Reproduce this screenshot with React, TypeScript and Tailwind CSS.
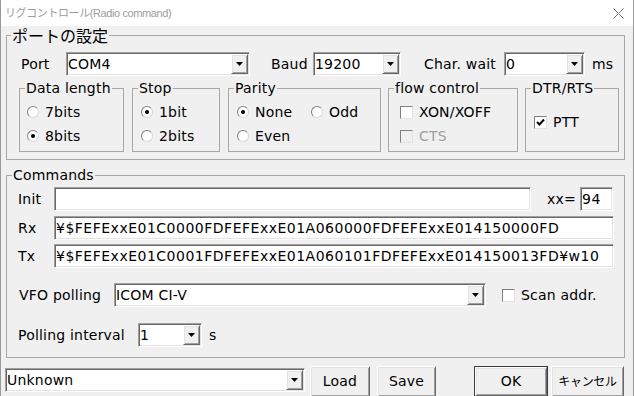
import type { ReactNode } from 'react';

const sunken =
  'bg-white border border-t-[#a0a0a0] border-l-[#a0a0a0] border-r-white border-b-white shadow-[inset_1px_1px_0_#696969,inset_-1px_-1px_0_#e3e3e3]';
const raised =
  'bg-[#f0f0f0] border border-t-white border-l-white border-r-[#696969] border-b-[#696969] shadow-[inset_1px_1px_0_#e3e3e3,inset_-1px_-1px_0_#a0a0a0]';

function Combo({ value, className }: { value: string; className: string }) {
  return (
    <div className={`${sunken} flex h-[24px] p-[1px] ${className}`}>
      <span className="flex-1 leading-[20px] whitespace-nowrap overflow-hidden">{value}</span>
      <span className={`${raised} w-[17px] flex items-center justify-center`}>
        <svg width="7" height="4" viewBox="0 0 7 4">
          <path d="M0 0H7L3.5 4Z" fill="#000" />
        </svg>
      </span>
    </div>
  );
}

function Field({ value, className }: { value: string; className: string }) {
  return (
    <div className={`${sunken} h-[24px] px-[1px] leading-[22px] tracking-[0.5px] whitespace-nowrap overflow-hidden ${className}`}>
      {value}
    </div>
  );
}

function Radio({ checked, label, className = '' }: { checked?: boolean; label: string; className?: string }) {
  return (
    <div className={`flex items-center h-[16px] ${className}`}>
      <span className="w-[12px] h-[12px] rounded-full bg-white border border-t-[#808080] border-l-[#808080] border-r-[#d8d8d8] border-b-[#d8d8d8] flex items-center justify-center">
        {checked && <span className="w-[4px] h-[4px] rounded-full bg-black" />}
      </span>
      <span className="ml-[6px]">{label}</span>
    </div>
  );
}

function Check({ checked, label, disabled }: { checked?: boolean; label: string; disabled?: boolean }) {
  return (
    <div className={`flex items-center h-[16px] ${disabled ? 'text-[#a0a0a0]' : ''}`}>
      <span
        className={`w-[13px] h-[13px] border border-t-[#808080] border-l-[#808080] border-r-[#e3e3e3] border-b-[#e3e3e3] flex items-center justify-center ${
          disabled ? 'bg-[#f0f0f0]' : 'bg-white'
        }`}
      >
        {checked && (
          <svg width="9" height="9" viewBox="0 0 9 9">
            <path d="M1 4L3.5 6.5L8 1.5" stroke="#000" strokeWidth="2" fill="none" />
          </svg>
        )}
      </span>
      <span className="ml-[6px]">{label}</span>
    </div>
  );
}

function Group({ title, className, children }: { title: string; className: string; children: ReactNode }) {
  return (
    <fieldset className={`border border-[#a8a8a8] ${className}`}>
      <legend className="ml-[5px] px-[1px] leading-[16px]">{title}</legend>
      {children}
    </fieldset>
  );
}

function Button({ label, isDefault, className }: { label: string; isDefault?: boolean; className: string }) {
  return (
    <div className={`h-[31px] ${isDefault ? 'border border-[#3c3c3c]' : ''} ${className}`}>
      <div className={`${raised} h-full flex items-center justify-center`}>{label}</div>
    </div>
  );
}

export default function App() {
  return (
    <div className="w-[634px] h-[396px] bg-[#f0f0f0] border-x border-[#9a9a9a] text-[14px] tracking-[0.2px] text-black font-['DejaVu_Sans','Noto_Sans_CJK_JP',sans-serif] overflow-hidden">
      {/* Title bar */}
      <div className="h-[26px] bg-white flex items-center justify-between pl-[4px] pr-[9px]">
        <span className="text-[11px] tracking-[-0.4px] text-[#9c9c9c] font-['Liberation_Sans','Noto_Sans_CJK_JP',sans-serif]">
          リグコントロール(Radio command)
        </span>
        <svg width="11" height="11" viewBox="0 0 11 11">
          <path d="M0.5 0.5L10.5 10.5M10.5 0.5L0.5 10.5" stroke="#7a7a7a" strokeWidth="1" />
        </svg>
      </div>

      <div className="px-[5px]">
        {/* Port settings */}
        <fieldset className="border border-[#a8a8a8] w-[619px]">
          <legend className="ml-[4px] px-[1px] text-[16px] leading-[18px] tracking-normal font-['Noto_Sans_CJK_JP',sans-serif]">
            ポートの設定
          </legend>
          <div className="pl-[14px] pt-[8px] flex items-center">
            <span className="w-[45px]">Port</span>
            <Combo value="COM4" className="w-[184px]" />
            <span className="ml-[21px] w-[42px]">Baud</span>
            <Combo value="19200" className="w-[88px]" />
            <span className="ml-[23px] w-[80px]">Char. wait</span>
            <Combo value="0" className="w-[81px]" />
            <span className="ml-[7px]">ms</span>
          </div>
          <div className="pl-[12px] mt-[4px] pb-[7px] flex gap-[8px]">
            <Group title="Data length" className="w-[105px]">
              <div className="pl-[7px] pt-[8px] pb-[7px] flex flex-col gap-[8px]">
                <Radio label="7bits" />
                <Radio label="8bits" checked />
              </div>
            </Group>
            <Group title="Stop" className="w-[88px]">
              <div className="pl-[8px] pt-[8px] pb-[7px] flex flex-col gap-[8px]">
                <Radio label="1bit" checked />
                <Radio label="2bits" />
              </div>
            </Group>
            <Group title="Parity" className="w-[153px]">
              <div className="pl-[8px] pt-[8px] pb-[7px] flex flex-col gap-[8px]">
                <div className="flex">
                  <Radio label="None" checked className="w-[74px]" />
                  <Radio label="Odd" />
                </div>
                <Radio label="Even" />
              </div>
            </Group>
            <Group title="flow control" className="w-[130px] -ml-[1px]">
              <div className="pl-[11px] pt-[8px] pb-[7px] flex flex-col gap-[8px]">
                <Check label="XON/XOFF" />
                <Check label="CTS" disabled />
              </div>
            </Group>
            <Group title="DTR/RTS" className="w-[94px] -ml-[1px]">
              <div className="pl-[8px] pt-[18px]">
                <Check label="PTT" checked />
              </div>
            </Group>
          </div>
        </fieldset>

        {/* Commands */}
        <Group title="Commands" className="w-[619px] mt-[7px]">
          <div className="pl-[11px] pt-[4px] pb-[10px] flex flex-col">
            <div className="flex items-center">
              <span className="w-[36px]">Init</span>
              <Field value="" className="w-[477px] h-[23px]" />
              <span className="ml-[16px] w-[33px]">xx=</span>
              <Field value="94" className="w-[33px] h-[23px]" />
            </div>
            <div className="flex items-center mt-[5px]">
              <span className="w-[36px]">Rx</span>
              <Field value="¥$FEFExxE01C0000FDFEFExxE01A060000FDFEFExxE014150000FD" className="w-[560px]" />
            </div>
            <div className="flex items-center mt-[4px]">
              <span className="w-[36px]">Tx</span>
              <Field value="¥$FEFExxE01C0001FDFEFExxE01A060101FDFEFExxE014150013FD¥w10" className="w-[560px]" />
            </div>
            <div className="flex items-center mt-[15px]">
              <span className="w-[96px] pl-[1px]">VFO polling</span>
              <Combo value="ICOM CI-V" className="w-[372px]" />
              <div className="ml-[16px]">
                <Check label="Scan addr." />
              </div>
            </div>
            <div className="flex items-center mt-[16px]">
              <span className="w-[120px]">Polling interval</span>
              <Combo value="1" className="w-[64px]" />
              <span className="ml-[7px]">s</span>
            </div>
          </div>
        </Group>

        {/* Bottom bar */}
        <div className="flex items-start mt-[8px]">
          <Combo value="Unknown" className="w-[300px] -ml-[1px] mt-[2px]" />
          <Button label="Load" className="w-[60px] ml-[5px]" />
          <Button label="Save" className="w-[59px] ml-[7px]" />
          <Button label="OK" isDefault className="w-[74px] ml-[38px]" />
          <Button label="キャンセル" className="w-[73px] ml-[3px] text-[12px] tracking-[-0.3px]" />
        </div>
      </div>
    </div>
  );
}
